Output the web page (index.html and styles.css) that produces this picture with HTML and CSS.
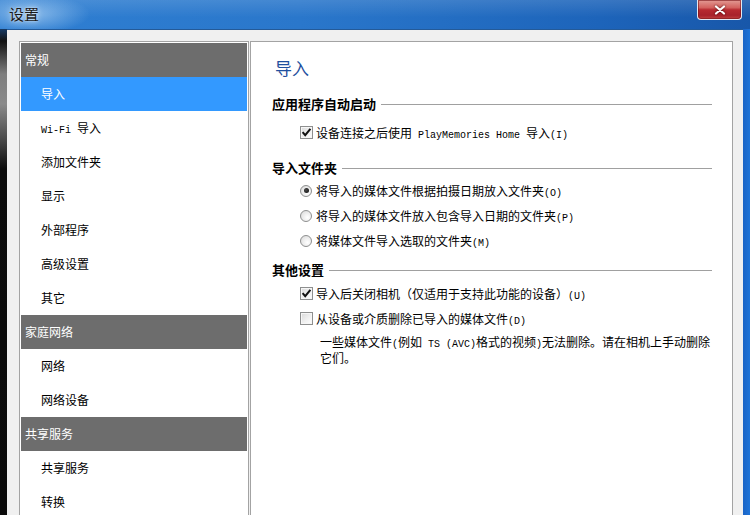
FILE: index.html
```html
<!DOCTYPE html>
<html lang="zh-CN">
<head>
<meta charset="utf-8">
<title>设置</title>
<link rel="stylesheet" href="styles.css">
</head>
<body>
<div class="window">
  <div class="titlebar">
    <span class="title">设置</span>
    <div class="close">
      <svg width="12" height="10" viewBox="0 0 12 10"><path d="M2 1.5 L10 8.5 M10 1.5 L2 8.5" stroke="#fff" stroke-width="2.2" stroke-linecap="round" fill="none"/></svg>
    </div>
  </div>
  <div class="frame">
    <div class="edge-left"></div>
    <div class="client">
      <nav class="nav">
        <div class="nav-head">常规</div>
        <div class="nav-item active">导入</div>
        <div class="nav-item"><span class="lat">Wi-Fi </span>导入</div>
        <div class="nav-item">添加文件夹</div>
        <div class="nav-item">显示</div>
        <div class="nav-item">外部程序</div>
        <div class="nav-item">高级设置</div>
        <div class="nav-item">其它</div>
        <div class="nav-head">家庭网络</div>
        <div class="nav-item">网络</div>
        <div class="nav-item">网络设备</div>
        <div class="nav-head">共享服务</div>
        <div class="nav-item">共享服务</div>
        <div class="nav-item">转换</div>
      </nav>
      <main class="pane">
        <div class="pane-title">导入</div>

        <div class="sec-head g1">应用程序自动启动</div>
        <div class="opts o1">
          <div class="opt">
            <span class="cb"><svg width="11" height="11" viewBox="0 0 11 11"><path d="M1.6 5.2 L4.2 8.2 L9.4 1.8" stroke="#111" stroke-width="2" fill="none"/></svg></span>
            <span>设备连接之后使用<span class="lat"> PlayMemories Home </span>导入<span class="lat">(I)</span></span>
          </div>
        </div>

        <div class="sec-head g2">导入文件夹</div>
        <div class="opts o2">
          <div class="opt"><span class="rb on"></span><span>将导入的媒体文件根据拍摄日期放入文件夹<span class="lat">(O)</span></span></div>
          <div class="opt"><span class="rb"></span><span>将导入的媒体文件放入包含导入日期的文件夹<span class="lat">(P)</span></span></div>
          <div class="opt"><span class="rb"></span><span>将媒体文件导入选取的文件夹<span class="lat">(M)</span></span></div>
        </div>

        <div class="sec-head g3">其他设置</div>
        <div class="opts o3">
          <div class="opt">
            <span class="cb"><svg width="11" height="11" viewBox="0 0 11 11"><path d="M1.6 5.2 L4.2 8.2 L9.4 1.8" stroke="#111" stroke-width="2" fill="none"/></svg></span>
            <span>导入后关闭相机（仅适用于支持此功能的设备）<span class="lat">(U)</span></span>
          </div>
          <div class="opt">
            <span class="cb"></span>
            <span>从设备或介质删除已导入的媒体文件<span class="lat">(D)</span></span>
          </div>
          <p class="desc"><span>一些媒体文件</span><span class="lat">(</span><span>例如</span><span class="lat"> TS (AVC)</span><span>格式的视频</span><span class="lat">)</span><span>无法删除。请在相机上手动删除</span><span>它们。</span></p>
        </div>
      </main>
    </div>
    <div class="edge-right"></div>
  </div>
</div>
</body>
</html>
```
FILE: styles.css
```css
html, body {
  margin: 0;
  padding: 0;
}

body {
  width: 750px;
  height: 515px;
  overflow: hidden;
  font-family: "Noto Sans CJK SC", "Noto Sans", sans-serif;
  font-size: 12px;
  color: #000;
  background: #1d6fcf;
}

.lat {
  font-family: "Liberation Mono", monospace;
  font-size: 10px;
  white-space: pre;
}

.window {
  display: flex;
  flex-direction: column;
  height: 515px;
}

.titlebar {
  height: 29px;
  flex: none;
  display: flex;
  align-items: flex-start;
  padding: 0 8px 0 9px;
  background:
    radial-gradient(ellipse 60px 20px at 30px 14px, rgba(210, 235, 255, 0.55), rgba(210, 235, 255, 0)),
    linear-gradient(180deg, rgba(255, 255, 255, 0.12), rgba(255, 255, 255, 0) 60%),
    linear-gradient(90deg, #2f7fd2 0%, #2a77cb 40%, #1d64ba 80%, #1857a9 100%);
}

.title {
  font-size: 15px;
  line-height: 16px;
  margin-top: 6px;
  color: #1a1a1a;
  text-shadow: 0 0 6px rgba(255, 255, 255, 0.75), 0 0 2px rgba(255, 255, 255, 0.6);
}

.close {
  margin-left: auto;
  width: 45px;
  height: 20px;
  box-sizing: border-box;
  border: 1px solid #e3e8f1;
  border-top: none;
  border-radius: 0 0 4px 4px;
  background: linear-gradient(180deg, #e39b95 0%, #d3625f 40%, #b72a30 52%, #a8222b 80%, #c0413f 100%);
  box-shadow: inset 0 0 0 1px rgba(120, 20, 25, 0.6);
  display: flex;
  align-items: center;
  justify-content: center;
}

.close svg {
  filter: drop-shadow(0 0 1px rgba(60, 0, 0, 0.9));
}

.frame {
  flex: 1;
  display: flex;
  min-height: 0;
}

.edge-left {
  width: 7px;
  flex: none;
  background: linear-gradient(180deg, #163a66 0, #121212 12px, #3c3c3c 25px, #7e7e7e 45px, #8a8a8a 75px, #4a4a4a 110px, #0c0c0c 140px, #0a0a0a 100%);
}

.edge-right {
  width: 7px;
  flex: none;
  background: linear-gradient(90deg, #1a64c6, #1f74d8);
}

.client {
  flex: 1;
  display: flex;
  gap: 1px;
  background: #f0f0f0;
  border-top: 1px solid #245a98;
  padding: 11px 10px 0 12px;
}

.nav {
  width: 230px;
  flex: none;
  box-sizing: border-box;
  border: 1px solid #a3a3a3;
  border-bottom: none;
  padding: 1px 1px 0;
  background: #fff;
}

.nav-head {
  height: 34px;
  line-height: 34px;
  padding-left: 4px;
  background: #6d6d6d;
  color: #fff;
}

.nav-item {
  height: 34px;
  line-height: 34px;
  padding-left: 20px;
}

.nav-item.active {
  background: #3399ff;
  color: #fff;
}

.pane {
  width: 483px;
  flex: none;
  box-sizing: border-box;
  border: 1px solid #a3a3a3;
  border-bottom: none;
  background: #fff;
  padding: 16px 20px 0 21px;
}

.pane-title {
  height: 20px;
  line-height: 20px;
  padding-left: 3px;
  font-size: 17px;
  color: #1f4f9e;
}

.sec-head {
  display: flex;
  align-items: center;
  height: 16px;
  font-size: 13px;
  font-weight: bold;
}

.sec-head::after {
  content: "";
  flex: 1;
  height: 1px;
  margin: 2px 0 0 5px;
  background: #a0a0a0;
}

.g1 { margin-top: 17px; }
.g2 { margin-top: 14px; }
.g3 { margin-top: 8px; }
.o1 { margin-top: 9px; }
.o2 { margin-top: 3px; }
.o3 { margin-top: 4px; }

.opt {
  display: flex;
  align-items: center;
  height: 25px;
  padding-left: 28px;
  gap: 3px;
}

.cb {
  width: 13px;
  height: 13px;
  flex: none;
  box-sizing: border-box;
  border: 1px solid #8e8f8f;
  background: linear-gradient(135deg, #d9d9d9 0%, #eeeeee 50%, #ffffff 100%);
  box-shadow: inset 0 0 0 1px #f6f6f6;
  display: flex;
  align-items: center;
  justify-content: center;
}

.rb {
  width: 12px;
  height: 12px;
  flex: none;
  box-sizing: border-box;
  margin-right: 1px;
  border: 1px solid #8e8f8f;
  border-radius: 50%;
  background: radial-gradient(circle at 65% 65%, #ffffff 0%, #f0f0f0 40%, #d6d6d6 100%);
  display: flex;
  align-items: center;
  justify-content: center;
}

.rb.on::after {
  content: "";
  width: 5px;
  height: 5px;
  border-radius: 50%;
  background: radial-gradient(circle at 40% 40%, #4a4a4a, #0a0a0a);
}

.desc {
  margin: 4px 0 0 48px;
  width: 392px;
  line-height: 13px;
}
```
